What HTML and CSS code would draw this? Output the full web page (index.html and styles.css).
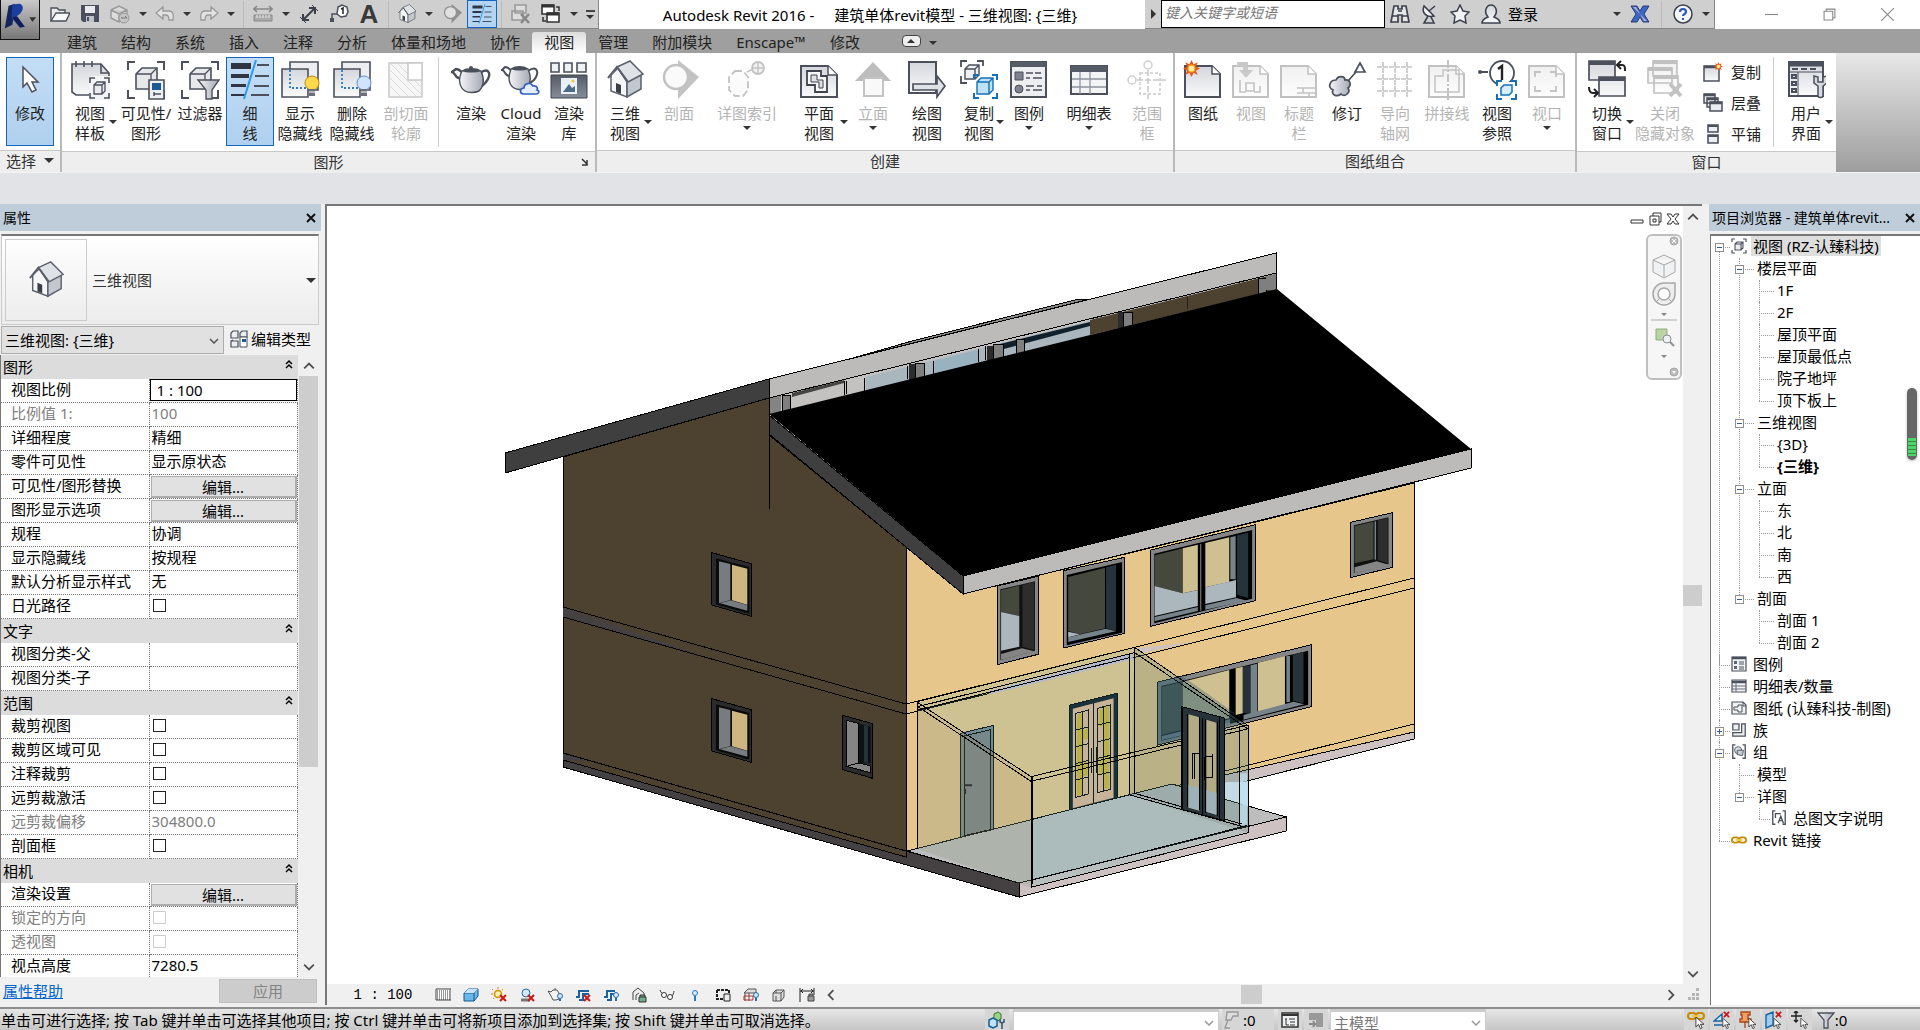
FILE: index.html
```html
<!DOCTYPE html>
<html lang="zh-CN">
<head>
  <meta charset="utf-8">
  <title>Autodesk Revit 2016</title>
  <link rel="stylesheet" href="styles.css">
</head>
<body>
  <!-- icon sprite -->
  <svg class="sprite" width="0" height="0">
    <defs>
      <linearGradient id="steel" x1="0" y1="0" x2="0" y2="1"><stop offset="0" stop-color="#d3d6dc"/><stop offset="1" stop-color="#fafafb"/></linearGradient>
      <linearGradient id="metal" x1="0" y1="0" x2="1" y2="0"><stop offset="0" stop-color="#f4f5f7"/><stop offset="1" stop-color="#a4a9b3"/></linearGradient>
      <linearGradient id="dark" x1="0" y1="0" x2="0" y2="1"><stop offset="0" stop-color="#565b68"/><stop offset="1" stop-color="#868c99"/></linearGradient>
    </defs>
    <symbol id="i-cursor" viewBox="0 0 40 40"><path d="M13 7v20l4-4 5 9 4-2-4-8h6z" fill="#fff" stroke="#4b505c" stroke-width="1.5"/></symbol>
    <symbol id="i-house" viewBox="0 0 40 40"><path d="M6 15l7-7 9 14v15L6 31z" fill="#f5f6f8" stroke="#5b606c" stroke-width="1.5"/><path d="M22 21l14-7v15l-14 8z" fill="#c3c7ce" stroke="#5b606c" stroke-width="1.5"/><path d="M12 7L25 1l13 13-15 8z" fill="#dfe2e6" stroke="#5b606c" stroke-width="1.5"/><path d="M3 18l9-11 11 15" fill="none" stroke="#5b606c" stroke-width="2"/><path d="M11 23l5 2v9l-5-2z" fill="#3a3f4a"/></symbol>
    <symbol id="i-template" viewBox="0 0 40 40"><path d="M2 4h29l8 9v22H6l-4-3z" fill="url(#steel)" stroke="#4b505c" stroke-width="1.6"/><path d="M6 1v6M14 1v6M22 1v6M31 4v9h8" fill="none" stroke="#4b505c" stroke-width="1.6"/><path d="M19 16h21v24H19z" fill="#f3f4f6"/><path d="M20 23v-5h5M34 18h5v5M39 33v5h-5M25 38h-5v-5" fill="none" stroke="#4b505c" stroke-width="1.6"/><path d="M24 25l3-3h8v9l-3 3h-8zM24 25h8v9M32 25l3-3" fill="#e9ebee" stroke="#4b505c" stroke-width="1.3"/></symbol>
    <symbol id="i-framecube" viewBox="0 0 40 40"><path d="M2 10V2h7M31 2h7v8M38 30v8h-7M9 38H2v-8" fill="none" stroke="#4b505c" stroke-width="2"/><path d="M10 14l6-6h15v15l-6 6H10z" fill="#e6e8ec" stroke="#4b505c" stroke-width="1.6"/><path d="M10 14h15v15M25 14l6-6" fill="none" stroke="#4b505c" stroke-width="1.3"/></symbol>
    <symbol id="i-cube16" viewBox="0 0 16 16"><path d="M1 4V1h3M12 1h3v3M15 12v3h-3M4 15H1v-3" fill="none" stroke="#4b505c" stroke-width="1.2"/><path d="M4 6l2-2h6v6l-2 2H4zM4 6h6v6M10 6l2-2" fill="#eee" stroke="#4b505c" stroke-width="1.1"/></symbol>
    <symbol id="i-visibility" viewBox="0 0 40 40"><use href="#i-framecube"/><path d="M23 20h15v19H23z" fill="#eceef1" stroke="#4b505c" stroke-width="1.6"/><path d="M26 23h9v7h-9z" fill="#1c5a96"/><path d="M28 34h7M28 32v4" stroke="#4b505c" stroke-width="1.5"/></symbol>
    <symbol id="i-filter" viewBox="0 0 40 40"><use href="#i-framecube"/><path d="M18 20h21l-7 10v9h-6v-9z" fill="url(#metal)" stroke="#4b505c" stroke-width="1.4"/></symbol>
    <symbol id="i-thin" viewBox="0 0 40 40"><path d="M1 3h20v6H1zM1 14h18v4H1zM1 24h15v3H1zM1 34h14v2H1z" fill="#2f3542"/><path d="M27 5h12M25 16h14M24 26h15M21 35h18" stroke="#4b505c" stroke-width="2"/><path d="M26 0L14 39" stroke="#2f9bea" stroke-width="2"/></symbol>
    <symbol id="i-hidden" viewBox="0 0 40 40"><path d="M10 2h28v28H10z" fill="#eceef1" stroke="#4b505c" stroke-width="1.6"/><path d="M2 9h26v28H2z" fill="url(#steel)" stroke="#4b505c" stroke-width="1.6"/><path d="M10 10v18h17" fill="none" stroke="#2a7ac4" stroke-width="1.8" stroke-dasharray="2 2"/></symbol>
    <symbol id="i-showhide" viewBox="0 0 40 40"><use href="#i-hidden"/><circle cx="32" cy="23" r="7" fill="#ffd94a" stroke="#b98a16"/><path d="M29 29h6v7h-6z" fill="#6a6f7b"/><path d="M29 32h6" stroke="#fff"/></symbol>
    <symbol id="i-delhide" viewBox="0 0 40 40"><use href="#i-hidden"/><circle cx="32" cy="23" r="7" fill="#cfe4ff" stroke="#6890c8"/><path d="M29 29h6v7h-6z" fill="#6a6f7b"/><path d="M29 32h6" stroke="#fff"/></symbol>
    <symbol id="i-cut" viewBox="0 0 40 40"><path d="M3 3h33v34H3z" fill="#e6e7e9" stroke="#666" stroke-width="1.5"/><path d="M4 26l10 10M4 18l18 18M4 10l26 26M5 4l30 30M12 4l24 24" stroke="#999"/><path d="M22 3h14v17H22z" fill="#fff" stroke="#666" stroke-width="1.5"/></symbol>
    <symbol id="i-teapot" viewBox="0 0 40 40"><path d="M8 18C4 18 4 12 1 12l4-3c5 0 6 5 9 5M29 13c8-6 11 0 8 6-2 4-4 6-8 8" fill="none" stroke="#4b505c" stroke-width="2.4"/><path d="M11 11c5-3 14-3 19 0 4 9 2 16-2 20-4 2-11 2-14 0C8 27 7 19 11 11z" fill="url(#metal)" stroke="#4b505c" stroke-width="1.4"/><path d="M11 11c5-3 14-3 19 0-4 2-15 2-19 0z" fill="#4a4f5b"/><circle cx="20" cy="8" r="2" fill="#4a4f5b"/></symbol>
    <symbol id="i-cloud" viewBox="0 0 40 40"><path d="M8 16C4 16 4 10 1 10l3-3c5 0 6 5 8 5M27 11c8-6 11 0 8 6-2 4-4 5-7 6" fill="none" stroke="#4b505c" stroke-width="2"/><path d="M10 9c5-3 12-3 17 0 4 9 2 14-1 19-4 2-10 2-13 0C7 24 7 17 10 9z" fill="url(#metal)" stroke="#4b505c" stroke-width="1.4"/><path d="M10 9c5-3 12-3 17 0-4 2-13 2-17 0z" fill="#4a4f5b"/><path d="M22 34c-4-1-3-6 1-6 0-5 7-6 9-2 4-1 5 3 4 4 3 1 2 4-1 4z" fill="#e4efff" stroke="#3560bd" stroke-width="1.7"/></symbol>
    <symbol id="i-gallery" viewBox="0 0 40 40"><path d="M2 3h8v9H2zM15 3h8v9h-8zM28 3h9v9h-9z" fill="#f0f1f3" stroke="#4b505c" stroke-width="1.6"/><path d="M2 15h36v23H2z" fill="url(#dark)" stroke="#3f444f"/><path d="M12 18h16v16H12z" fill="#e9f1f6"/><path d="M14 32l6-8 3 4 3-2v6z" fill="#4a6d87"/><circle cx="24" cy="21" r="1.5" fill="#f4c33b"/></symbol>
    <symbol id="i-section" viewBox="0 0 40 40"><path d="M19 0l21 17-21 22z" fill="#555"/><circle cx="17" cy="17" r="12" fill="#f1f1f1" stroke="#555" stroke-width="2.5"/></symbol>
    <symbol id="i-callout" viewBox="0 0 40 40"><path d="M8 11h8l5 6v13l-5 6H8l-6-6V17z" fill="#f4f4f4" stroke="#555" stroke-width="1.8" stroke-dasharray="7 3"/><circle cx="31" cy="8" r="6" fill="#ddd" stroke="#555" stroke-width="1.8"/><path d="M20 12l6-3M25 8h12M31 2v12" stroke="#555" stroke-width="1.5"/></symbol>
    <symbol id="i-plan" viewBox="0 0 40 40"><path d="M2 6h27l9 9v22H2z" fill="url(#steel)" stroke="#4b505c" stroke-width="2"/><path d="M29 6v9h9" fill="#fff" stroke="#4b505c" stroke-width="1.5"/><path d="M8 11h14v5h6v16H16v-7H8z" fill="#f5f6f8" stroke="#3e434e" stroke-width="1.8"/><path d="M12 15h6v5h6v8h-4v-6h-8z" fill="#dfe1e5" stroke="#3e434e"/></symbol>
    <symbol id="i-elev" viewBox="0 0 40 40"><path d="M20 2l18 19H2z" fill="#444"/><path d="M11 18h19v18H11z" fill="#f0f0f0" stroke="#555" stroke-width="2"/></symbol>
    <symbol id="i-draft" viewBox="0 0 40 40"><path d="M2 2h27v31H2z" fill="url(#steel)" stroke="#4b505c" stroke-width="2"/><path d="M6 24h24v-8l8 10-8 11v-7H6z" fill="#dfe2e6" stroke="#4b505c" stroke-width="1.7"/></symbol>
    <symbol id="i-dup" viewBox="0 0 40 40"><path d="M2 7V1h6M18 1h6v5M8 23H2v-7" fill="none" stroke="#4b505c" stroke-width="1.8"/><path d="M6 9l4-4h10v10l-4 4H6zM6 9h10v10M16 9l4-4" fill="#eef0f2" stroke="#4b505c" stroke-width="1.4"/><path d="M15 19v-4h5M33 15h5v5M38 33v5h-5M20 38h-5v-5" fill="none" stroke="#1470b8" stroke-width="2"/><path d="M18 22l4-4h12v12l-4 4H18zM18 22h12v12M30 22l4-4" fill="#bfe2f8" stroke="#1470b8" stroke-width="1.4"/></symbol>
    <symbol id="i-legend" viewBox="0 0 40 40"><path d="M2 2h35v35H2z" fill="#eceef1" stroke="#4b505c" stroke-width="2"/><path d="M2 2h35v5H2z" fill="#565b68"/><path d="M6 12h8v8H6z" fill="#7d828e" stroke="#4b505c"/><circle cx="10" cy="29" r="4" fill="#7d828e" stroke="#4b505c"/><path d="M17 13h7M26 13h6M17 18h4M24 18h9M17 26h8M28 26h5M17 30h4M24 30h9" stroke="#4b505c" stroke-width="1.6"/></symbol>
    <symbol id="i-sched" viewBox="0 0 40 40"><path d="M2 6h36v28H2z" fill="#f3f4f6" stroke="#4b505c" stroke-width="2"/><path d="M2 6h36v6H2z" fill="#565b68"/><path d="M3 19h34M3 27h34M11 12v22M21 12v22" stroke="#8f949e" stroke-width="1.3"/></symbol>
    <symbol id="i-legend16" viewBox="0 0 16 16"><path d="M1 1h14v14H1z" fill="#f1f2f4" stroke="#4b505c" stroke-width="1.2"/><path d="M1 2h14" stroke="#4b505c" stroke-width="2.5"/><path d="M3 5h3v3H3zM3 10h3v3H3z" fill="#5f6572"/><path d="M8 6h5M8 8h5M8 11h5M8 13h5" stroke="#4b505c"/></symbol>
    <symbol id="i-sched16" viewBox="0 0 16 16"><path d="M1 2h14v12H1z" fill="#f1f2f4" stroke="#4b505c" stroke-width="1.2"/><path d="M1 4h14" stroke="#4b505c" stroke-width="2.5"/><path d="M1 8h14M1 11h14M5 4v10" stroke="#6a6f7b"/></symbol>
    <symbol id="i-sheet16" viewBox="0 0 16 16"><path d="M1 2h11l3 3v9H1z" fill="#f1f2f4" stroke="#4b505c" stroke-width="1.2"/><path d="M3 7h4V5h4v7H7v-2H3zM12 2v4h3" fill="none" stroke="#4b505c"/></symbol>
    <symbol id="i-scope" viewBox="0 0 40 40"><circle cx="21" cy="5" r="4" fill="#fff" stroke="#777" stroke-width="1.5"/><circle cx="5" cy="20" r="4" fill="#fff" stroke="#777" stroke-width="1.5"/><path d="M21 10v29M10 20h29" stroke="#666" stroke-width="1.5" stroke-dasharray="6 2"/><path d="M13 13h20v21H13z" fill="none" stroke="#666" stroke-width="1.5" stroke-dasharray="3 2"/></symbol>
    <symbol id="i-sheet" viewBox="0 0 40 40"><path d="M2 6h27l8 8v23H2z" fill="url(#steel)" stroke="#4b505c" stroke-width="2"/><path d="M29 6v8h8" fill="#fff" stroke="#4b505c" stroke-width="1.5"/></symbol>
    <symbol id="i-spark" viewBox="0 0 16 16"><path d="M8 0l2 4 4-2-2 4 4 2-4 2 2 4-4-2-2 4-2-4-4 2 2-4-4-2 4-2-2-4 4 2z" fill="#e8561c"/><circle cx="8" cy="8" r="3.2" fill="#fff2a0" stroke="#f5a623"/></symbol>
    <symbol id="i-newsheet" viewBox="0 0 40 40"><use href="#i-sheet"/><use href="#i-spark" width="17" height="17"/></symbol>
    <symbol id="i-placeview" viewBox="0 0 40 40"><use href="#i-sheet"/><path d="M6 2h11v8h5l-7 8-7-8h4V6H6z" fill="#666"/><path d="M9 20v12h6M23 32h6v-6M15 23h8v8h-8z" fill="none" stroke="#555" stroke-width="1.6"/></symbol>
    <symbol id="i-titleblock" viewBox="0 0 40 40"><use href="#i-sheet"/><path d="M18 28h19M18 33h19M24 28v5M30 33v4" stroke="#555" stroke-width="1.6"/></symbol>
    <symbol id="i-revision" viewBox="0 0 40 40"><path d="M33 3l5 9H28zM29 12l-8 9" fill="none" stroke="#4b505c" stroke-width="1.7"/><path d="M9 20c2-5 9-4 9 0 5-1 7 5 3 8 3 4-3 10-7 6-5 4-10 0-8-4-6-3-3-10 3-10z" fill="url(#metal)" stroke="#4b505c" stroke-width="1.7"/></symbol>
    <symbol id="i-grid" viewBox="0 0 40 40"><path d="M2 7h36M2 19h36M2 31h36M8 2v36M20 2v36M32 2v36" stroke="#555" stroke-width="1.6" stroke-dasharray="5 1"/></symbol>
    <symbol id="i-match" viewBox="0 0 40 40"><use href="#i-sheet"/><path d="M8 16h8v-6h16v22H8z" fill="none" stroke="#555" stroke-width="1.5"/><path d="M21 0v40" stroke="#555" stroke-width="2" stroke-dasharray="8 2 2 2"/></symbol>
    <symbol id="i-viewref" viewBox="0 0 40 40"><path d="M2 12h9" stroke="#4b505c" stroke-width="2"/><circle cx="3" cy="12" r="2" fill="#4b505c"/><circle cx="25" cy="13" r="12" fill="#fff" stroke="#4b505c" stroke-width="1.8"/><path d="M21 9l4-3v14" fill="none" stroke="#222" stroke-width="2.4"/><path d="M19 22h20v17H19z" fill="#fff"/><path d="M20 26v-5h5M34 21h5v5M39 34v5h-5M25 39h-5v-5" fill="none" stroke="#1470b8" stroke-width="2"/><path d="M24 28l3-3h8v7l-3 3h-8z" fill="#d7effc" stroke="#1470b8" stroke-width="1.5"/></symbol>
    <symbol id="i-viewport" viewBox="0 0 40 40"><use href="#i-sheet"/><path d="M8 17v-5h6M23 12h6v5M29 26v5h-6M14 31H8v-5" fill="none" stroke="#555" stroke-width="1.8"/></symbol>
    <symbol id="i-switch" viewBox="0 0 40 40"><path d="M2 1h26v19H2zM12 17h26v19H12z" fill="url(#steel)" stroke="#4b505c" stroke-width="1.7"/><path d="M2 1h26v4H2zM12 17h26v4H12z" fill="#4b505c"/><path d="M31 5h4c3 0 3 2 3 6M34 1l-4 4 4 4M10 33H6c-3 0-4-2-4-6M7 29l4 4-4 4" fill="none" stroke="#222" stroke-width="2"/></symbol>
    <symbol id="i-closehid" viewBox="0 0 40 40"><path d="M8 1h24v15H8zM3 8h24v15H3zM9 16h24v17H9z" fill="url(#steel)" stroke="#4b505c" stroke-width="1.7"/><path d="M8 2h24M3 9h24M9 17h24" stroke="#4b505c" stroke-width="4"/><path d="M25 24l11 12M36 24L25 36" stroke="#555" stroke-width="4"/></symbol>
    <symbol id="i-ui" viewBox="0 0 40 40"><path d="M3 2h34v34H3z" fill="url(#steel)" stroke="#4b505c" stroke-width="2"/><path d="M3 2h34v4H3zM3 12h34" fill="#4b505c" stroke="#4b505c"/><path d="M6 9h6M15 9h6M24 9h6M6 15h4v3H6zM6 22h4v3H6zM6 29h4v3H6z" fill="none" stroke="#4b505c" stroke-width="2"/><path d="M12 12v24" stroke="#4b505c"/><path d="M28 16v7l4 3v10c0 2 5 2 5 0V26l4-3v-7l-4 1v5h-5v-5z" fill="#d5dae3" stroke="#4b505c" stroke-width="1.5"/></symbol>
    <symbol id="i-cascade" viewBox="0 0 20 20"><path d="M1 1h11v9H1zM4 5h11v9H4z" fill="#eee" stroke="#4b505c" stroke-width="1.5"/><path d="M7 9h12v9H7z" fill="#eceef1" stroke="#4b505c" stroke-width="1.5"/><path d="M1 2h11M4 6h11M7 10h12" stroke="#4b505c" stroke-width="2.5"/></symbol>
    <symbol id="i-tile" viewBox="0 0 20 20"><path d="M5 1h10v7H5zM5 11h10v8H5z" fill="#eceef1" stroke="#4b505c" stroke-width="1.6"/><path d="M5 2h10M5 12h10" stroke="#4b505c" stroke-width="2"/></symbol>
    <symbol id="i-newwin" viewBox="0 0 20 20"><path d="M1 4h15v15H1z" fill="url(#steel)" stroke="#4b505c" stroke-width="1.5"/><path d="M1 5h15" stroke="#4b505c" stroke-width="2.5"/><use href="#i-spark" x="11" width="9" height="9"/></symbol>
    <symbol id="i-open" viewBox="0 0 20 20"><path d="M1 17V4h6l2 2h6v3" fill="#e8eaed" stroke="#4b505c" stroke-width="1.4"/><path d="M1 17L6 9h14l-4 8z" fill="#f8f9fa" stroke="#4b505c" stroke-width="1.4"/></symbol>
    <symbol id="i-save" viewBox="0 0 20 20"><path d="M1 1h18v17H3l-2-2z" fill="#4a505e"/><path d="M5 2h10v7H5z" fill="#e9ebee"/><path d="M6 12h8v6H6z" fill="#bfc3ca"/><path d="M8 13v4" stroke="#4a505e" stroke-width="2"/></symbol>
    <symbol id="i-sync" viewBox="0 0 20 20"><path d="M1 6l8-4 8 4v8l-8 4-8-4zM1 6l8 4 8-4M9 10v8" fill="#dcdcdc" stroke="#999" stroke-width="1.4"/><circle cx="14" cy="14" r="5" fill="#c4c4c4" stroke="#999"/><path d="M11 14h6l-2-2" fill="none" stroke="#777"/></symbol>
    <symbol id="i-undo" viewBox="0 0 20 20"><path d="M1 9l7-6v4h6c4 0 5 4 4 9h-4c0-4-1-5-3-5H8v4z" fill="#e2e2e2" stroke="#999" stroke-width="1.3"/></symbol>
    <symbol id="i-redo" viewBox="0 0 20 20"><path d="M19 9l-7-6v4H6c-4 0-5 4-4 9h4c0-4 1-5 3-5h3v4z" fill="#e2e2e2" stroke="#999" stroke-width="1.3"/></symbol>
    <symbol id="i-ruler" viewBox="0 0 20 20"><path d="M1 5h18M4 2L1 5l3 3M16 2l3 3-3 3" fill="none" stroke="#888" stroke-width="1.6"/><path d="M1 11h18v6H1z" fill="#aaa" stroke="#888"/><path d="M4 11v3M7 11v3M10 11v3M13 11v3M16 11v3" stroke="#eee"/></symbol>
    <symbol id="i-dim" viewBox="0 0 20 20"><path d="M4 16L16 4M4 10v6h6M10 4h6v6" fill="none" stroke="#3c414c" stroke-width="2"/><path d="M1 13l6 6M13 1l6 6" stroke="#3c414c"/></symbol>
    <symbol id="i-tag" viewBox="0 0 20 20"><path d="M9 3l4-2 5 2 1 5-2 4-5 1-4-3z" fill="#fff" stroke="#4b505c" stroke-width="1.5"/><path d="M12 5l2-1v6" fill="none" stroke="#222" stroke-width="1.5"/><path d="M8 10H3v5" fill="none" stroke="#4b505c" stroke-width="1.5"/><path d="M1 14h4v4H1z" fill="#4b505c"/></symbol>
    <symbol id="i-sw20" viewBox="0 0 20 20"><path d="M1 1h12v9H1zM6 9h12v9H6z" fill="#fff" stroke="#333" stroke-width="1.6"/><path d="M1 2h12M6 10h12" stroke="#333" stroke-width="3"/><path d="M15 3h3v4M2 13v4h3" fill="none" stroke="#333" stroke-width="1.5"/></symbol>
    <symbol id="i-cl20" viewBox="0 0 20 20"><path d="M4 1h11v8H4zM1 7h11v9H1z" fill="#ddd" stroke="#999" stroke-width="1.6"/><path d="M10 10l8 9M18 10l-8 9" stroke="#888" stroke-width="2.5"/></symbol>
    <symbol id="i-bino" viewBox="0 0 20 20"><path d="M4 2h4v3h4V2h4l3 16h-7v-7H8v7H1z" fill="#e4e6ea" stroke="#3c414c" stroke-width="1.7"/><path d="M2 12h6M12 12h6M8 7h4" stroke="#3c414c" stroke-width="1.6"/></symbol>
    <symbol id="i-dish" viewBox="0 0 20 20"><path d="M4 2c-3 7 3 12 10 10z" fill="#f3f4f6" stroke="#3c414c" stroke-width="1.6"/><path d="M9 7l6-5M8 12l-4 7h10l-3-6" fill="none" stroke="#3c414c" stroke-width="1.6"/></symbol>
    <symbol id="i-star" viewBox="0 0 20 20"><path d="M10 1l3 6 6 1-4 4 1 7-6-3-6 3 1-7-4-4 6-1z" fill="#f1f2f4" stroke="#3c414c" stroke-width="1.5"/></symbol>
    <symbol id="i-user" viewBox="0 0 20 20"><path d="M1 19c0-4 4-5 6-6-5-6-1-12 3-12s8 6 3 12c2 1 6 2 6 6z" fill="url(#steel)" stroke="#3c414c" stroke-width="1.6"/></symbol>
    <symbol id="i-x" viewBox="0 0 20 20"><path d="M1 2h6l3 5 3-5h6l-5 8 5 8h-6l-3-5-3 5H1l5-8z" fill="#3f66c4" stroke="#2b3f75"/><path d="M3 3h3l8 14h3z" fill="#a9b6d6"/></symbol>
    <symbol id="i-help" viewBox="0 0 20 20"><circle cx="10" cy="10" r="9" fill="#f4f6fa" stroke="#3c414c" stroke-width="1.5"/><path d="M7 8c0-4 6-4 6 0 0 2-3 2-3 4" fill="none" stroke="#2a57b8" stroke-width="2.2"/><path d="M9 14h2v2H9z" fill="#2a57b8"/></symbol>
    <symbol id="i-chev" viewBox="0 0 10 6"><path d="M1 1l4 4 4-4" fill="none" stroke="currentColor" stroke-width="1.5"/></symbol>
    <symbol id="i-close" viewBox="0 0 10 10"><path d="M1 1l8 8M9 1L1 9" stroke="#111" stroke-width="2"/></symbol>
    <symbol id="i-edittype" viewBox="0 0 18 18"><path d="M1 3l2-2h5v7H1zM10 3l2-2h5v6h-7zM1 11h7v6H1zM1 11l2-1" fill="#eceef1" stroke="#4b505c" stroke-width="1.2"/><path d="M10 7h7v10h-7z" fill="#fff" stroke="#4b505c"/><path d="M12 9h4v3h-4z" fill="#1c5a96"/></symbol>
    <symbol id="i-link" viewBox="0 0 18 18"><rect x="1" y="6" width="8" height="6" rx="3" fill="none" stroke="#c58a00" stroke-width="2"/><rect x="9" y="6" width="8" height="6" rx="3" fill="none" stroke="#c58a00" stroke-width="2"/><path d="M5 9h8" stroke="#f2c84b" stroke-width="2"/></symbol>
    <symbol id="i-family" viewBox="0 0 18 18"><path d="M2 2h7v7H2zM12 2h4v14H2v-4h10z" fill="#eceef1" stroke="#4b505c" stroke-width="1.4"/></symbol>
    <symbol id="i-group" viewBox="0 0 18 18"><path d="M5 1H2v15h3M13 1h3v15h-3" fill="none" stroke="#4b505c" stroke-width="1.5"/><circle cx="8" cy="7" r="4" fill="#dde0e5" stroke="#4b505c"/><path d="M7 7h7l-1 6-6-1z" fill="#c8ccd3" stroke="#4b505c"/></symbol>
    <symbol id="i-tgroup" viewBox="0 0 18 18"><path d="M5 1H2v15h3M13 1h3v15h-3M5 9V4h6M8 15l3-8 3 8M9 12h4" fill="none" stroke="#4b505c" stroke-width="1.5"/></symbol>
    <symbol id="i-arrow" viewBox="0 0 10 14"><path d="M1 1v11l3-3 2 5 2-1-2-4h4z" fill="#fff" stroke="#333"/></symbol>
    <symbol id="i-redx" viewBox="0 0 8 8"><path d="M1 1l6 6M7 1L1 7" stroke="#d01717" stroke-width="2"/></symbol>
    <symbol id="i-box16" viewBox="0 0 16 16"><path d="M1 6l4-4h10v7l-4 5H1z" fill="#6db6ea" stroke="#14598f"/><path d="M1 6h10v8M11 6l4-4" fill="none" stroke="#14598f"/><path d="M1 6l4-4h10l-4 4z" fill="#c6e5fa"/></symbol>
  </svg>

  <header class="titlebar">
    <div class="qat">
      <button class="tool" aria-label="打开"><svg><use href="#i-open"/></svg></button>
      <button class="tool" aria-label="保存"><svg><use href="#i-save"/></svg></button>
      <button class="tool" aria-label="同步"><svg><use href="#i-sync"/></svg></button>
      <button class="drop" aria-label="同步选项"></button>
      <button class="tool narrow" aria-label="放弃"><svg><use href="#i-undo"/></svg></button>
      <button class="drop" aria-label="放弃列表"></button>
      <button class="tool narrow" aria-label="重做"><svg><use href="#i-redo"/></svg></button>
      <button class="drop" aria-label="重做列表"></button>
      <span class="sep"></span>
      <button class="tool" aria-label="测量"><svg><use href="#i-ruler"/></svg></button>
      <button class="drop" aria-label="测量选项"></button>
      <button class="tool" aria-label="对齐尺寸标注"><svg><use href="#i-dim"/></svg></button>
      <button class="tool" aria-label="按类别标记"><svg><use href="#i-tag"/></svg></button>
      <button class="tool letter">A</button>
      <span class="sep"></span>
      <button class="tool narrow" aria-label="默认三维视图"><svg><use href="#i-house"/></svg></button>
      <button class="drop" aria-label="三维视图选项"></button>
      <button class="tool faded" aria-label="剖面"><svg><use href="#i-section"/></svg></button>
      <button class="tool active" aria-label="细线"><svg><use href="#i-thin"/></svg></button>
      <span class="sep"></span>
      <button class="tool" aria-label="关闭隐藏窗口"><svg><use href="#i-cl20"/></svg></button>
      <button class="tool" aria-label="切换窗口"><svg><use href="#i-sw20"/></svg></button>
      <button class="drop" aria-label="窗口列表"></button>
      <button class="drop custom" aria-label="自定义快速访问工具栏"></button>
    </div>
    <div class="title"><span>Autodesk Revit 2016 -</span><span>建筑单体revit模型 - 三维视图: {三维}</span></div>
    <div class="infocenter">
      <button class="expand" aria-label="展开"></button>
      <input class="search" type="text" placeholder="键入关键字或短语" aria-label="搜索">
      <button class="tool" aria-label="查找"><svg><use href="#i-bino"/></svg></button>
      <button class="tool" aria-label="通讯中心"><svg><use href="#i-dish"/></svg></button>
      <button class="tool" aria-label="收藏夹"><svg><use href="#i-star"/></svg></button>
      <button class="login"><svg><use href="#i-user"/></svg>登录</button>
      <button class="drop" aria-label="登录选项"></button>
      <button class="tool" aria-label="Exchange"><svg><use href="#i-x"/></svg></button>
      <span class="sep"></span>
      <button class="tool" aria-label="帮助"><svg><use href="#i-help"/></svg></button>
      <button class="drop" aria-label="帮助选项"></button>
    </div>
    <div class="winbtns">
      <button aria-label="最小化"><svg viewBox="0 0 12 12"><path d="M0 6h12"/></svg></button>
      <button aria-label="还原"><svg viewBox="0 0 12 12"><path d="M1 3h8v8H1zM3 3V1h8v8H9"/></svg></button>
      <button aria-label="关闭"><svg viewBox="0 0 12 12"><path d="M0 0l12 12M12 0L0 12"/></svg></button>
    </div>
    <button class="appmenu" aria-label="应用程序菜单">
      <svg viewBox="0 0 40 39"><path d="M8 5l7-2-3 22-8 4z" fill="#14265e"/><path d="M12 4l7-1c7 1 4 11-3 13l9 11-5 1-9-10z" fill="#1c3f9e"/><path d="M12 17l5-1 8 11-5 1z" fill="#0f1e55"/><path d="M30 17h7l-4 5z" fill="#333"/></svg>
    </button>
  </header>

  <nav class="tabs">
    <a href="#">建筑</a><a href="#">结构</a><a href="#">系统</a><a href="#">插入</a><a href="#">注释</a><a href="#">分析</a><a href="#">体量和场地</a><a href="#">协作</a><a href="#" class="current">视图</a><a href="#">管理</a><a href="#">附加模块</a><a href="#">Enscape™</a><a href="#">修改</a>
    <button class="minimize" aria-label="最小化功能区"><i></i></button>
    <button class="drop" aria-label="功能区选项"></button>
  </nav>

  <div class="ribbon">
    <section class="panel">
      <div class="tools">
        <button class="big w48 active modify"><svg><use href="#i-cursor"/></svg><span>修改</span></button>
      </div>
      <h2 class="left">选择<i class="tri"></i></h2>
    </section>
    <section class="panel">
      <div class="tools">
        <button class="big w56"><svg><use href="#i-template"/></svg><span>视图<br>样板</span><i class="tri side"></i></button>
        <button class="big w56"><svg><use href="#i-visibility"/></svg><span>可见性/<br>图形</span></button>
        <button class="big w52"><svg><use href="#i-filter"/></svg><span>过滤器</span></button>
        <button class="big w48 active"><svg><use href="#i-thin"/></svg><span>细<br>线</span></button>
        <button class="big w52"><svg><use href="#i-showhide"/></svg><span>显示<br>隐藏线</span></button>
        <button class="big w52"><svg><use href="#i-delhide"/></svg><span>删除<br>隐藏线</span></button>
        <button class="big w56" disabled><svg><use href="#i-cut"/></svg><span>剖切面<br>轮廓</span></button>
        <span class="rule"></span>
        <button class="big w56"><svg><use href="#i-teapot"/></svg><span>渲染</span></button>
        <button class="big w44"><svg><use href="#i-cloud"/></svg><span>Cloud<br>渲染</span></button>
        <button class="big w52"><svg><use href="#i-gallery"/></svg><span>渲染<br>库</span></button>
      </div>
      <h2>图形<svg class="launch" viewBox="0 0 8 8"><path d="M1 1l5 5M6 2v5H1" fill="none" stroke="#333" stroke-width="1.5"/></svg></h2>
    </section>
    <section class="panel">
      <div class="tools">
        <button class="big w56"><svg><use href="#i-house"/></svg><span>三维<br>视图</span><i class="tri side"></i></button>
        <button class="big w52" disabled><svg><use href="#i-section"/></svg><span>剖面</span></button>
        <button class="big w84" disabled><svg><use href="#i-callout"/></svg><span>详图索引</span><i class="tri"></i></button>
        <button class="big w60"><svg><use href="#i-plan"/></svg><span>平面<br>视图</span><i class="tri side"></i></button>
        <button class="big w48" disabled><svg><use href="#i-elev"/></svg><span>立面</span><i class="tri"></i></button>
        <button class="big w60"><svg><use href="#i-draft"/></svg><span>绘图<br>视图</span></button>
        <button class="big w44"><svg><use href="#i-dup"/></svg><span>复制<br>视图</span><i class="tri side"></i></button>
        <button class="big w56"><svg><use href="#i-legend"/></svg><span>图例</span><i class="tri"></i></button>
        <button class="big w64"><svg><use href="#i-sched"/></svg><span>明细表</span><i class="tri"></i></button>
        <button class="big w52" disabled><svg><use href="#i-scope"/></svg><span>范围<br>框</span></button>
      </div>
      <h2>创建</h2>
    </section>
    <section class="panel padded">
      <div class="tools">
        <button class="big w52"><svg><use href="#i-newsheet"/></svg><span>图纸</span></button>
        <button class="big w44" disabled><svg><use href="#i-placeview"/></svg><span>视图</span></button>
        <button class="big w52" disabled><svg><use href="#i-titleblock"/></svg><span>标题<br>栏</span></button>
        <button class="big w44"><svg><use href="#i-revision"/></svg><span>修订</span></button>
        <button class="big w52" disabled><svg><use href="#i-grid"/></svg><span>导向<br>轴网</span></button>
        <button class="big w52" disabled><svg><use href="#i-match"/></svg><span>拼接线</span></button>
        <button class="big w48"><svg><use href="#i-viewref"/></svg><span>视图<br>参照</span></button>
        <button class="big w52" disabled><svg><use href="#i-viewport"/></svg><span>视口</span><i class="tri"></i></button>
      </div>
      <h2>图纸组合</h2>
    </section>
    <section class="panel padded last">
      <div class="tools">
        <button class="big w56"><svg><use href="#i-switch"/></svg><span>切换<br>窗口</span><i class="tri side"></i></button>
        <button class="big w60" disabled><svg><use href="#i-closehid"/></svg><span>关闭<br>隐藏对象</span></button>
        <div class="stack">
          <button><svg><use href="#i-newwin"/></svg>复制</button>
          <button><svg><use href="#i-cascade"/></svg>层叠</button>
          <button><svg><use href="#i-tile"/></svg>平铺</button>
        </div>
        <span class="rule"></span>
        <button class="big w56"><svg><use href="#i-ui"/></svg><span>用户<br>界面</span><i class="tri side"></i></button>
      </div>
      <h2>窗口</h2>
    </section>
    <div class="ribbon-rest"></div>
  </div>
  <div class="optionsbar"></div>

  <main>
    <aside class="properties">
      <h1 class="dock-title">属性<button aria-label="关闭属性"><svg><use href="#i-close"/></svg></button></h1>
      <button class="typesel">
        <span class="thumb"><svg><use href="#i-house"/></svg></span>
        <span>三维视图</span>
        <i class="tri"></i>
      </button>
      <div class="instance">
        <div class="combo">
          <select aria-label="实例"><option>三维视图: {三维}</option></select>
          <svg><use href="#i-chev"/></svg>
        </div>
        <button class="edittype"><svg><use href="#i-edittype"/></svg>编辑类型</button>
      </div>
      <div class="grid-wrap">
        <div class="grid-view">
          <table class="props">
            <colgroup><col><col></colgroup>
            <tr class="cat"><th colspan="2">图形<svg viewBox="0 0 8 10"><path d="M1 5l3-3 3 3M1 9l3-3 3 3"/></svg></th></tr>
            <tr><th><label for="scale">视图比例</label></th><td><input type="text" id="scale" value="1 : 100"></td></tr>
            <tr class="ro"><th>比例值 1:</th><td>100</td></tr>
            <tr><th>详细程度</th><td>精细</td></tr>
            <tr><th>零件可见性</th><td>显示原状态</td></tr>
            <tr><th>可见性/图形替换</th><td class="btn"><button>编辑...</button></td></tr>
            <tr><th>图形显示选项</th><td class="btn"><button>编辑...</button></td></tr>
            <tr><th>规程</th><td>协调</td></tr>
            <tr><th>显示隐藏线</th><td>按规程</td></tr>
            <tr><th>默认分析显示样式</th><td>无</td></tr>
            <tr><th><label for="sun">日光路径</label></th><td><input type="checkbox" id="sun"></td></tr>
            <tr class="cat"><th colspan="2">文字<svg viewBox="0 0 8 10"><path d="M1 5l3-3 3 3M1 9l3-3 3 3"/></svg></th></tr>
            <tr><th>视图分类-父</th><td></td></tr>
            <tr><th>视图分类-子</th><td></td></tr>
            <tr class="cat"><th colspan="2">范围<svg viewBox="0 0 8 10"><path d="M1 5l3-3 3 3M1 9l3-3 3 3"/></svg></th></tr>
            <tr><th><label for="crop">裁剪视图</label></th><td><input type="checkbox" id="crop"></td></tr>
            <tr><th><label for="cropvis">裁剪区域可见</label></th><td><input type="checkbox" id="cropvis"></td></tr>
            <tr><th><label for="anno">注释裁剪</label></th><td><input type="checkbox" id="anno"></td></tr>
            <tr><th><label for="far">远剪裁激活</label></th><td><input type="checkbox" id="far"></td></tr>
            <tr class="ro"><th>远剪裁偏移</th><td>304800.0</td></tr>
            <tr><th><label for="box">剖面框</label></th><td><input type="checkbox" id="box"></td></tr>
            <tr class="cat"><th colspan="2">相机<svg viewBox="0 0 8 10"><path d="M1 5l3-3 3 3M1 9l3-3 3 3"/></svg></th></tr>
            <tr><th>渲染设置</th><td class="btn"><button>编辑...</button></td></tr>
            <tr class="ro"><th><label for="lock">锁定的方向</label></th><td><input type="checkbox" id="lock" disabled></td></tr>
            <tr class="ro"><th><label for="persp">透视图</label></th><td><input type="checkbox" id="persp" disabled></td></tr>
            <tr><th>视点高度</th><td>7280.5</td></tr>
          </table>
        </div>
        <div class="vscroll">
          <button class="up" aria-label="向上"><svg><use href="#i-chev"/></svg></button>
          <span class="thumb-prop"></span>
          <button aria-label="向下"><svg><use href="#i-chev"/></svg></button>
        </div>
      </div>
      <div class="prop-foot"><a href="#">属性帮助</a><button disabled>应用</button></div>
    </aside>

    <section class="view">
      <div class="canvas">
        <svg class="model" viewBox="327 206 1356 778">
          <!-- far roof edge and clerestory strip -->
          <path class="l" d="M853 358L912 341 1075 300 1090 299z" fill="#8a8a8a"/>
          <path d="M769 398L1276 273v20L769 414z" fill="#c3c2c1"/>
          <path d="M866 377L1090 321v20L866 395z" fill="#a9b6be"/>
          <path d="M935 361L978 350v12L935 374z" fill="#99b2bf"/>
          <path d="M1000 344L1090 322v4L1000 350z" fill="#10212c"/>
          <path d="M1090 320L1276 274v16L1090 335z" fill="#4d422f"/>
          <path d="M792 393L844 380v3L792 397z" fill="#444"/>
          <path d="M769 398l12-3v17l-12 3z" fill="#848484"/>
          <path class="l" d="M844 381v14M846 381v13M864 378v13M907 366v13M933 361v13M978 349v13M985 346v14" fill="none"/>
          <path class="l" d="M782 395h8v17h-8zM915 363h9v17h-9zM993 344h10v17h-10zM1016 339h8v16h-8zM1123 312h9v17h-9zM1258 278h8v17h-8z" fill="#7f7f7f"/>
          <path d="M909 364h6v16h-6zM987 346h6v15h-6zM1118 312h5v17h-5z" fill="#2c2c2c"/>
          <path d="M1266 276l10-2v16h-10z" fill="#7f7f7f"/>
          <path class="l" d="M1187 297v12" fill="none" stroke-opacity=".5"/>
          <!-- walls -->
          <path class="l" d="M563 457L769 398v37l137 112v310L563 760z" fill="#4d422f"/>
          <path class="l" d="M906 547l57 47 451-111v252L906 857z" fill="#e7c68c"/>
          <path class="l" d="M1414 732v7L1195 794l-28-6z" fill="#cdc1c1"/>
          <path class="l" d="M1414 724L1185 781M906 704l508-126M906 714l508-126" fill="none"/>
          <path d="M563 607l140 49-140-39zM563 753l26 8-26-1z" fill="#454142"/>
          <path class="l" d="M563 607l343 97M563 617l343 97M563 753l343 98M769 379v130" fill="none"/>
          <!-- slab -->
          <path class="l" d="M563 760l343 97v-6l113 32v14L563 767z" fill="#454142"/>
          <path class="l" d="M907 851l265-67 114 33-267 66z" fill="#bdbdbd"/>
          <path class="l" d="M1019 883l267-66v14l-267 66z" fill="#cdc1c1"/>
          <!-- roof -->
          <path class="l" d="M505 453L769 379v19L505 473z" fill="#3f3f3f"/>
          <path class="l" d="M769 379L1276 253v20L769 398z" fill="#bcbbba"/>
          <path class="l" d="M1276 273v16" fill="none"/>
          <path d="M769 414L1277 289l194 160-508 127z" fill="#000"/>
          <path class="l" d="M769 415l194 161v18L769 434z" fill="#3f3f3f"/>
          <path class="l" d="M963 576l508-127v19L963 594z" fill="#bcbbba"/>
          <!-- gable windows -->
          <g transform="translate(490 520) scale(.3333)">
            <g id="gw">
              <path class="l" d="M665 98l119 33v158l-119-34z" fill="#2b2b2b"/>
              <path d="M678 115l100 26v140l-100-28z" fill="#0a0a0a"/>
              <path d="M687 124l34 8v108l-34 10z" fill="#767c80"/>
              <path d="M726 134l46 12v108l-46-13z" fill="#cdb680"/>
              <path d="M690 250l31-9 51 14v17z" fill="#767c80"/>
            </g>
            <use href="#gw" y="438"/>
            <path class="l" d="M1058 586l90 25v164l-90-26z" fill="#2b2b2b"/>
            <path class="l" d="M1070 601l37 10v118l-37 10z" fill="#858585"/>
            <path d="M1108 611l34 9v110h-34z" fill="#0c1114"/>
            <path d="M1122 616h12v112h-12z" fill="#27333b"/>
            <path class="l" d="M1070 739l37-10 34 9v20z" fill="#858585"/>
          </g>
          <!-- front openings and glass porch -->
          <g transform="translate(890 480) scale(.3571 .3333)">
            <path class="l" d="M300 318l115-29v234l-115 31z" fill="#858585"/>
            <path d="M309 328l97-24v208l-97 28z" fill="#111"/>
            <path d="M311 330l51-13v91l-51-12z" fill="#45483c"/>
            <path d="M311 396l51 12v92l-51 12z" fill="#abb6bd"/>
            <path d="M371 315l33-9v204l-33-10z" fill="#2d2d2d"/>
            <path d="M311 522l58-17 35 9-93 25z" fill="#858585"/>

            <path class="l" d="M486 272l171-40v228l-171 44z" fill="#858585"/>
            <path d="M495 285l155-39v212l-155 38z" fill="#000"/>
            <path d="M499 291l103-28v182l-70 18-33-10z" fill="#45483c"/>
            <path d="M499 455l33 8-33 9z" fill="#abb6bd"/>
            <path d="M605 262l28-8v200l-28-9z" fill="#27333b"/>
            <path d="M499 472l105-26 28 8-133 32z" fill="#76838b"/>

            <path class="l" d="M730 210l293-76v228l-293 77z" fill="#858585"/>
            <path d="M740 221l274-71v206l-274 74z" fill="#000"/>
            <path d="M741 226l79-21v135l-79-22z" fill="#45483c"/>
            <path d="M820 205l42-11v136l-42 10z" fill="#cec091"/>
            <path d="M741 318l79 22 42-10v48l-121 30z" fill="#abb6bd"/>
            <path d="M883 189l67-17v134l-67 16z" fill="#cec091"/>
            <path d="M953 172l15-4v130h-15z" fill="#76838b"/>
            <path d="M883 322l86-22v52l-86 20z" fill="#abb6bd"/>
            <path d="M972 166l31-8v196l-31-10z" fill="#27333b"/>
            <path d="M741 411l121-30v12l-121 31zM883 376l87-22 30 8-117 27z" fill="#76838b"/>
            <path d="M868 192h4v200h-4z" fill="#666"/>

            <path class="l" d="M1290 127l117-29v164l-117 31z" fill="#858585"/>
            <path d="M1299 136l97-24v140l-97 28z" fill="#111"/>
            <path d="M1301 138l53-13v113l-53 12z" fill="#45483c"/>
            <path d="M1357 124h4v115h-4z" fill="#76838b"/>
            <path d="M1366 121l28-7v136l-28-10z" fill="#2d2d2d"/>
            <path d="M1301 262l62-18 33 10-95 26z" fill="#858585"/>

            <!-- ground floor window -->
            <path class="l" d="M750 606l431-112v186L750 795z" fill="#858585"/>
            <path d="M760 618l411-106v162L760 782z" fill="#000"/>
            <path d="M762 620l58-15v144l-58 15z" fill="#45483c"/>
            <path d="M820 605l130-35v145l-130 30z" fill="#cec091"/>
            <path d="M968 565l20-5v140l-20 5zM1030 548l76-20v150l-76 20z" fill="#cec091"/>
            <path d="M988 560l22-4v146l-22-4zM1128 524l30-8v154l-30-8z" fill="#27333b"/>
            <path d="M1010 556l18-5v148h-18zM1110 528h10v138h-10z" fill="#76838b"/>
            <path d="M762 768l190-50v14l-190 48zM990 705l140-40 30 8-170 46z" fill="#76838b"/>

            <!-- light on the floor band -->
            <path d="M690 505l165-20-150 34z" fill="#cdc1c1"/>
            <path d="M270 635L680 520v18L280 643z" fill="#c3bcd0"/>

            <!-- grey door -->
            <path class="l" d="M198 760l92-24v312l-92 24z" fill="#76838b"/>
            <path class="l" d="M208 768l73-19v300l-73 18z" fill="#7b7f82"/>
            <path d="M208 916h22M210 926v16" stroke="#111" stroke-width="6"/>
            <!-- wooden double door -->
            <path class="l" d="M502 676l134-36v314l-134 36z" fill="#0b171e"/>
            <path d="M512 686l114-31v298l-114 32z" fill="#dfb492"/>
            <path class="l" d="M569 670v302M520 700l36-10v252l-36 10zM581 685l36-10v253l-36 10z" fill="none"/>
            <path d="M524 704l14-4v244l-14 4zM540 750l14-4v30l-14 4zM540 850l14-4v40l-14 4zM600 682l13-4v246l-13 4zM586 690l12-3v50l-12 4zM586 835l12-3v50l-12 4z" fill="#cdb02f"/>
            <path class="l" d="M538 696v252M598 682v250M522 750l34-9M522 800l34-9M522 850l34-9M522 900l34-9M583 735l34-9M583 785l34-9M583 835l34-9M583 885l34-9M565 805v75M578 800v78" fill="none"/>

            <!-- glazing tint -->
            <path d="M78 668L685 502l319 236v320L395 1222 78 1107z" fill="#60b0b0" fill-opacity=".18"/>
            <path d="M78 668l317 224v330L78 1107z" fill="#c08050" fill-opacity=".13"/>
            <path d="M685 502l319 236v320L672 945z" fill="#50604f" fill-opacity=".16"/>
            <path d="M888 930l55-24h60v74z" fill="#c4dbe6"/>
            <path d="M978 880h22v155h-22z" fill="#bfe6f4" fill-opacity=".7"/>
            <path d="M750 606l69-18 145 110v25L750 795z" fill="#25506a" fill-opacity=".3"/>
            <path class="l" d="M78 665L685 502l319 236M78 680L685 518l319 230M78 690L670 533M78 665v442M685 502v440M672 522v423l316 95M685 940l300 92M978 738v300" fill="none"/>
            <path class="l" d="M78 668l317 222 609-155M78 680l317 224 609-158" fill="none"/>
            <path class="l" d="M395 890v332l609-164V735M399 892v320M399 1200l600-163" fill="none"/>
            <!-- glass double door -->
            <path class="l" d="M817 680l119 34v308l-119-34z" fill="#27333b"/>
            <path d="M836 703l30 9v280l-30-9zM886 719l28 9v276l-28-9z" fill="#b3ab84"/>
            <path d="M836 915l30 8v68l-30-9zM886 930l28 9v65l-28-9z" fill="#9fb1b8"/>
            <path class="l" d="M820 684v304M834 702v280M866 711v280M874 715v288M884 718v280M916 727v280M924 712v308M936 714v306" fill="none"/>
            <path class="l" d="M848 820v76M852 820v76M848 820h18M880 830v70M902 822v72M886 830h18M886 892h18" fill="none"/>
          </g>
        </svg>
        <div class="mdi">
          <button aria-label="最小化视图"><svg viewBox="0 0 14 14"><path d="M1 8h12v3H1z"/></svg></button>
          <button aria-label="还原视图"><svg viewBox="0 0 14 14"><path d="M2 4h9v9H2zM5 4V1h8v9h-2M5 7h3v3H5z"/></svg></button>
          <button aria-label="关闭视图"><svg viewBox="0 0 14 14"><path d="M1 2h4l2 3 2-3h4L9 7l4 5H9L7 9l-2 3H1l4-5z"/></svg></button>
        </div>
        <div class="navbar">
          <svg viewBox="0 0 36 146">
            <rect x="1" y="1" width="34" height="144" rx="5" fill="#f6f6f6" stroke="#bfbfbf" stroke-width="2"/>
            <g fill="none" stroke="#a8a8a8"><circle cx="28" cy="7" r="4" fill="#bbb"/><path d="M26 5l4 4M30 5l-4 4" stroke="#fff"/><path d="M7 26l11-5 11 5v12l-11 6-11-6zM7 26l11 5 11-5M18 31v13" fill="#f0f1f2"/><path d="M18 49h11v11a11 11 0 1 1-11-11z" fill="#eceeef" stroke-width="1.5"/><circle cx="18" cy="60" r="6" fill="#fafafa" stroke-width="1.5"/><path d="M14 64l-4 4M22 64l4 4M5 86h26"/></g>
            <path d="M15 79h6l-3 3zM15 121h6l-3 3z" fill="#888"/>
            <path d="M10 95h11v11H10z" fill="#b9d3a5" stroke="#8fae7b"/><circle cx="21" cy="105" r="4" fill="#eef2f4" stroke="#8a8f95"/><path d="M24 108l4 4" stroke="#8a8f95" stroke-width="2"/>
            <circle cx="28" cy="138" r="4" fill="#bbb" stroke="#a8a8a8"/><path d="M26 137h4l-2 3z" fill="#fff"/>
          </svg>
        </div>
      </div>
      <div class="vscroll view-v">
        <button class="up" aria-label="向上滚动"><svg><use href="#i-chev"/></svg></button>
        <span class="thumb-view"></span>
        <button aria-label="向下滚动"><svg><use href="#i-chev"/></svg></button>
      </div>
      <div class="viewbar">
        <button class="scale">1 : 100</button>
        <button aria-label="详细程度"><svg viewBox="0 0 16 16"><path d="M1 2h15v11H1z" fill="#fff" stroke="#444"/><path d="M2 4h13M2 6h13M2 8h13M2 10h13M2 12h13" stroke="#333" stroke-dasharray="1 1"/></svg></button>
        <button aria-label="视觉样式"><svg><use href="#i-box16"/></svg></button>
        <button aria-label="日光路径"><svg viewBox="0 0 16 16"><circle cx="7" cy="7" r="3.5" fill="#fff3b0" stroke="#d18c00" stroke-width="1.5"/><path d="M7 0v2M1 2l1 1M0 7h2M2 12l1-1M12 2l-1 1" stroke="#d18c00"/><use href="#i-redx" x="8" y="7" width="8" height="8"/></svg></button>
        <button aria-label="阴影"><svg viewBox="0 0 16 16"><path d="M2 13h9" stroke="#777" stroke-width="3"/><circle cx="7" cy="6" r="4" fill="#cfe8fb" stroke="#2b6ca5"/><use href="#i-redx" x="8" y="7" width="8" height="8"/></svg></button>
        <button aria-label="渲染"><svg viewBox="0 0 16 16"><path d="M1 4l3 1 2-2h4l2 3v6l-3 1H6L4 9zM7 2h2" fill="#f3f3f3" stroke="#555"/><circle cx="13" cy="9" r="2.5" fill="#cfe8fb" stroke="#2b6ca5"/><path d="M12 12h2v2h-2z" fill="#2b6ca5"/></svg></button>
        <button aria-label="裁剪视图"><svg viewBox="0 0 16 16"><path d="M1 10h3V4h10M4 13h4V7h6" fill="none" stroke="#1b62a0" stroke-width="2"/><use href="#i-redx" x="8" y="7" width="8" height="8"/></svg></button>
        <button aria-label="裁剪区域"><svg viewBox="0 0 16 16"><path d="M1 10h3V4h8M4 13h4V7h4" fill="none" stroke="#1b62a0" stroke-width="2"/><circle cx="13" cy="8" r="2.5" fill="#cfe8fb" stroke="#2b6ca5"/><path d="M12 11h2v3h-2z" fill="#2b6ca5"/></svg></button>
        <button aria-label="锁定三维视图"><svg viewBox="0 0 16 16"><path d="M2 13V5l5-4 6 5v3M5 13V8l3-2" fill="#eee" stroke="#444"/><path d="M8 10h7v5H8zM9 10V8h5v2" fill="#6fae8c" stroke="#333"/></svg></button>
        <button aria-label="临时隐藏"><svg viewBox="0 0 16 16"><path d="M1 3c1 3 2 3 3 4M15 4c-1 5-2 5-3 6" fill="none" stroke="#333"/><circle cx="5" cy="8" r="2.5" fill="#fff" stroke="#333"/><circle cx="11" cy="10" r="2.5" fill="#fff" stroke="#333"/></svg></button>
        <button aria-label="显示隐藏图元"><svg viewBox="0 0 16 16"><circle cx="8" cy="6" r="2.5" fill="#d7ecff" stroke="#2478c8"/><path d="M7 9h2v5H7z" fill="#2478c8"/></svg></button>
        <button aria-label="临时视图属性"><svg viewBox="0 0 16 16"><path d="M2 3h12v3M2 3v9h6" fill="none" stroke="#222" stroke-width="2" stroke-dasharray="3 1"/><path d="M9 7h6v7H9z" fill="#eee" stroke="#222"/></svg></button>
        <button aria-label="分析模型"><svg viewBox="0 0 16 16"><path d="M1 6l4-4h8v4H1zM2 6v8M6 6v8" fill="#ddd" stroke="#555"/><path d="M1 9h9v4H1z" fill="none" stroke="#b33"/><circle cx="13" cy="8" r="2.5" fill="#cfe8fb" stroke="#2b6ca5"/><path d="M12 11h2v3h-2z" fill="#2b6ca5"/></svg></button>
        <button aria-label="位移集"><svg viewBox="0 0 16 16"><path d="M2 6l3-3h8v7l-3 4H2zM2 6h8v8M10 6l3-3M5 6V3M5 14V9" fill="#ddd" stroke="#555"/></svg></button>
        <button aria-label="约束"><svg viewBox="0 0 16 16"><path d="M1 1v14M15 1v7M1 4h14M4 2L2 4l2 2M12 2l2 2-2 2" fill="none" stroke="#222"/><path d="M9 9h6v5H9zM10 9V7h4v2" fill="#999" stroke="#444"/></svg></button>
        <div class="hscroll">
          <button class="lf" aria-label="向左"><svg><use href="#i-chev"/></svg></button>
          <span class="thumb-h"></span>
          <button class="rt" aria-label="向右"><svg><use href="#i-chev"/></svg></button>
        </div>
      </div>
      <svg class="grip" viewBox="0 0 19 21"><path d="M13 4h3v3h-3zM9 9h3v3H9zM13 9h3v3h-3zM5 13h3v3H5zM9 13h3v3H9zM13 13h3v3h-3z" fill="#b5b5b5"/></svg>
    </section>

    <aside class="browser">
      <h1 class="dock-title">项目浏览器 - 建筑单体revit...<button aria-label="关闭项目浏览器"><svg><use href="#i-close"/></svg></button></h1>
      <div class="tree-box">
        <ul class="tree">
          <li><div class="row"><button class="tog" aria-label="折叠"></button><svg><use href="#i-cube16"/></svg><span class="sel">视图 (RZ-认臻科技)</span></div>
            <ul>
              <li><div class="row"><button class="tog" aria-label="折叠"></button>楼层平面</div>
                <ul><li><div class="row">1F</div></li><li><div class="row">2F</div></li><li><div class="row">屋顶平面</div></li><li><div class="row">屋顶最低点</div></li><li><div class="row">院子地坪</div></li><li><div class="row">顶下板上</div></li></ul></li>
              <li><div class="row"><button class="tog" aria-label="折叠"></button>三维视图</div>
                <ul><li><div class="row">{3D}</div></li><li><div class="row"><b>{三维}</b></div></li></ul></li>
              <li><div class="row"><button class="tog" aria-label="折叠"></button>立面</div>
                <ul><li><div class="row">东</div></li><li><div class="row">北</div></li><li><div class="row">南</div></li><li><div class="row">西</div></li></ul></li>
              <li><div class="row"><button class="tog" aria-label="折叠"></button>剖面</div>
                <ul><li><div class="row">剖面 1</div></li><li><div class="row">剖面 2</div></li></ul></li>
            </ul></li>
          <li><div class="row"><svg><use href="#i-legend16"/></svg><span>图例</span></div></li>
          <li><div class="row"><svg><use href="#i-sched16"/></svg><span>明细表/数量</span></div></li>
          <li><div class="row"><svg><use href="#i-sheet16"/></svg><span>图纸 (认臻科技-制图)</span></div></li>
          <li><div class="row"><button class="tog plus" aria-label="展开"></button><svg><use href="#i-family"/></svg><span>族</span></div></li>
          <li><div class="row"><button class="tog" aria-label="折叠"></button><svg><use href="#i-group"/></svg><span>组</span></div>
            <ul>
              <li><div class="row">模型</div></li>
              <li><div class="row"><button class="tog" aria-label="折叠"></button>详图</div>
                <ul><li><div class="row icon"><svg><use href="#i-tgroup"/></svg><span>总图文字说明</span></div></li></ul></li>
            </ul></li>
          <li><div class="row"><svg><use href="#i-link"/></svg><span>Revit 链接</span></div></li>
        </ul>
        <div class="meter"></div>
      </div>
    </aside>
  </main>

  <footer class="status">
    <span class="hint">单击可进行选择; 按 Tab 键并单击可选择其他项目; 按 Ctrl 键并单击可将新项目添加到选择集; 按 Shift 键并单击可取消选择。</span>
    <button aria-label="工作集"><svg viewBox="0 0 18 18"><path d="M6 3l4-2 3 2v5l-3 2-4-2z" fill="#9fd08a" stroke="#2c7a1e"/><path d="M1 9l4-2 4 2v6l-4 2-4-2z" fill="#bfe2f8" stroke="#145c97" stroke-width="1.5"/><path d="M12 8v3l2 1v6M16 8v3l-2 1" fill="none" stroke="#356" stroke-width="1.5"/></svg></button>
    <div class="combo ws"><select aria-label="活动工作集"><option></option></select><svg><use href="#i-chev"/></svg></div>
    <button class="count"><svg viewBox="0 0 18 18"><path d="M5 1h11v4h-5l-2 4H4zM6 9l-3 8h5" fill="#ddd" stroke="#999" stroke-width="1.4"/></svg>:0</button>
    <button aria-label="设计选项"><svg viewBox="0 0 18 18"><path d="M1 2h16v14H1z" fill="#eef0f2" stroke="#333" stroke-width="1.5"/><path d="M1 4h16" stroke="#333" stroke-width="2"/><path d="M4 8h2M8 8h6M5 8v6h3M9 11h5M9 14h5" fill="none" stroke="#333"/></svg></button>
    <button aria-label="添加到集"><svg viewBox="0 0 18 18"><path d="M2 2h14v14H9V9H2z" fill="#999"/><path d="M2 13h6l-2-3M6 16l2-3" fill="none" stroke="#888" stroke-width="2"/></svg></button>
    <div class="combo opt"><select aria-label="设计选项集"><option>主模型</option></select><svg><use href="#i-chev"/></svg></div>
    <div class="selectors">
      <button aria-label="选择链接"><svg viewBox="0 0 18 18"><use href="#i-link" y="-4" width="18" height="18"/><use href="#i-arrow" x="8" y="5" width="9" height="13"/></svg></button>
      <button aria-label="选择基线图元"><svg viewBox="0 0 18 18"><path d="M1 10l8-7v7zM1 14h9" fill="#cfe8fb" stroke="#1b62a0" stroke-width="1.4"/><use href="#i-redx" x="10" width="7" height="7"/><use href="#i-arrow" x="9" y="6" width="8" height="12"/></svg></button>
      <button aria-label="选择锁定图元"><svg viewBox="0 0 18 18"><path d="M2 1h9v3H9v4h3v3H1V8h2V4H2zM6 11v6" fill="#f0a060" stroke="#a5441a" stroke-width="1.3"/><use href="#i-arrow" x="9" y="6" width="8" height="12"/></svg></button>
      <button aria-label="按面选择图元"><svg viewBox="0 0 18 18"><path d="M1 4l7-3v13l-7 3z" fill="#9ccdf0" stroke="#1b62a0" stroke-width="1.4"/><use href="#i-redx" x="10" width="7" height="7"/><use href="#i-arrow" x="8" y="6" width="8" height="12"/></svg></button>
      <button aria-label="选择时拖拽图元"><svg viewBox="0 0 18 18"><path d="M5 0v11M0 5h11M3 2l2-2 2 2M3 9l2 2 2-2" fill="none" stroke="#222" stroke-width="1.4"/><use href="#i-arrow" x="9" y="6" width="8" height="12"/></svg></button>
      <button class="count flt"><svg viewBox="0 0 18 18"><path d="M1 2h16l-6 7v8H7V9z" fill="url(#metal)" stroke="#4b505c" stroke-width="1.3"/></svg>:0</button>
    </div>
  </footer>
</body>
</html>
```

FILE: styles.css
```css
* {
  box-sizing: border-box;
}

body {
  margin: 0;
  height: 100vh;
  display: flex;
  flex-direction: column;
  overflow: hidden;
  background-color: #f0f0f0;
  color: #000;
  font: 15px/20px "Noto Sans", "Noto Sans CJK SC", sans-serif;
}

button, input, select {
  margin: 0;
  padding: 0;
  border: 0;
  border-radius: 0;
  background: none;
  font: inherit;
  color: inherit;
}

svg {
  display: block;
  flex: none;
}

.sprite {
  position: absolute;
}

/* title bar */
.titlebar {
  position: relative;
  display: flex;
  height: 29px;
  background-color: #fff;
}

.qat, .infocenter {
  display: flex;
  align-items: center;
  background-color: #cfcfcf;
  border-bottom: 1px solid #868686;
  border-right: 1px solid #868686;
}

.qat {
  margin-left: 40px;
  padding-left: 5px;
}

.tool {
  display: flex;
  align-items: center;
  justify-content: center;
  width: 30px;
  height: 28px;
}

.tool svg {
  width: 20px;
  height: 20px;
}

.narrow {
  width: 28px;
}

.faded {
  opacity: 0.5;
}

.tool.active {
  background-color: #b3d4f2;
  border: 1px solid #1565c0;
}

.letter {
  font: bold 26px/28px "Liberation Sans", sans-serif;
  color: #3a3a3a;
}

.drop {
  width: 16px;
  height: 20px;
  display: flex;
  align-items: center;
  justify-content: center;
}

.drop::after, .tri {
  content: "";
  width: 0;
  height: 0;
  border: 4px solid transparent;
  border-top-color: #333;
  border-bottom: 0;
}

.drop.custom {
  flex-direction: column;
  gap: 3px;
}

.drop.custom::before {
  content: "";
  width: 9px;
  height: 2px;
  background-color: #444;
}

.sep {
  width: 1px;
  height: 27px;
  margin: 0 4px;
  background-color: #bababa;
}

.infocenter .sep {
  margin: 0 6px;
}

.title {
  flex: 1;
  display: flex;
  align-items: center;
  justify-content: center;
  gap: 20px;
  padding-right: 4px;
  white-space: nowrap;
}

.expand {
  width: 16px;
  display: flex;
  justify-content: center;
}

.expand::after {
  content: "";
  border: 5px solid transparent;
  border-left-color: #333;
  border-right: 0;
}

.search {
  width: 224px;
  height: 28px;
  padding: 0 0 3px 3px;
  border: 1px solid #000;
  background-color: #fff;
  font-size: 14px;
  font-style: italic;
}

.search::placeholder {
  color: #777;
}

.login {
  display: flex;
  align-items: center;
  gap: 7px;
  width: 134px;
  padding-left: 6px;
}

.login svg {
  width: 20px;
  height: 20px;
}

.winbtns {
  display: flex;
  width: 205px;
  padding: 0 4px 0 27px;
}

.winbtns button {
  flex: 1;
  display: flex;
  align-items: center;
  justify-content: center;
}

.winbtns svg {
  width: 13px;
  height: 13px;
  fill: none;
  stroke: #888;
}

.appmenu {
  position: absolute;
  left: 0;
  top: 0;
  z-index: 2;
  width: 40px;
  height: 40px;
  background: linear-gradient(#c9c9c9, #777);
  border: 1px solid #111;
  border-top: 0;
}

/* ribbon tabs */
.tabs {
  display: flex;
  align-items: flex-end;
  height: 24px;
  padding-left: 55px;
  background-color: #9f9f9f;
}

.tabs a {
  height: 21px;
  padding: 0 12px;
  color: #222;
  text-decoration: none;
}

.tabs .current {
  background: linear-gradient(#dcdcdc, #fff);
  border-radius: 3px 3px 0 0;
}

.minimize {
  display: flex;
  align-items: center;
  justify-content: center;
  width: 19px;
  height: 12px;
  margin: 0 4px 6px 30px;
  border: 1px solid #444;
  border-radius: 4px;
  background-color: #eee;
}

.minimize i {
  border: 4px solid transparent;
  border-bottom-color: #333;
  border-top: 0;
}

/* ribbon */
.ribbon {
  display: flex;
  height: 119px;
}

.panel {
  display: flex;
  flex-direction: column;
  border-right: 2px solid #b9b9b9;
  background-color: #fff;
}

.panel.last {
  border-right: 0;
}

.tools {
  display: flex;
  flex: 1;
  padding: 4px 0;
}

.padded .tools {
  padding: 4px 2px;
}

.panel h2 {
  display: flex;
  align-items: center;
  justify-content: center;
  position: relative;
  height: 22px;
  margin: 0;
  padding-bottom: 2px;
  border-top: 1px solid #c8c8c8;
  background-color: #eee;
  color: #333;
  font-size: 15px;
  font-weight: normal;
}

.panel h2.left {
  gap: 8px;
}

.left .tri {
  border-width: 5px 5px 0;
}

.launch {
  position: absolute;
  right: 6px;
  width: 8px;
  height: 8px;
}

.big {
  position: relative;
  display: flex;
  flex-direction: column;
  align-items: center;
  height: 89px;
  padding-top: 3px;
  white-space: nowrap;
  color: #222;
}

.big svg {
  width: 40px;
  height: 40px;
  margin-bottom: 3px;
}

.big .tri {
  margin-top: 3px;
}

.big .tri.side {
  position: absolute;
  right: 1px;
  top: 60px;
}

.big.w44 .tri.side {
  right: -3px;
}

.big:disabled {
  color: #b4b4b4;
}

.big:disabled svg {
  opacity: 0.35;
  filter: grayscale(1);
}

.big.active {
  padding-top: 2px;
  border: 1px solid #1565c0;
  background: linear-gradient(#c3ddf5, #b0d0ef);
}

.modify {
  margin: 0 6px;
}

.w44 { width: 44px; }
.w48 { width: 48px; }
.w52 { width: 52px; }
.w56 { width: 56px; }
.w60 { width: 60px; }
.w64 { width: 64px; }
.w84 { width: 84px; }

.rule {
  width: 1px;
  height: 90px;
  margin: 0 4px;
  background-color: #ccc;
}

.stack {
  display: flex;
  flex-direction: column;
  justify-content: space-between;
  padding: 5px 8px 3px;
}

.stack button {
  display: flex;
  align-items: center;
  gap: 8px;
  color: #222;
}

.stack svg {
  width: 20px;
  height: 20px;
}

.ribbon-rest {
  flex: 1;
  background: linear-gradient(#e8e8e8, #9d9d9d);
}

.optionsbar {
  height: 32px;
  background-color: #e1e3e6;
  border-top: 1px solid #f4f4f4;
}

/* main area */
main {
  flex: 1;
  display: grid;
  grid-template-columns: 321px minmax(0, 1fr) 211px;
  min-height: 0;
}

.dock-title {
  display: flex;
  align-items: center;
  justify-content: space-between;
  height: 27px;
  margin: 0;
  padding: 0 3px;
  background-color: #bfcddb;
  font-size: 14px;
  font-weight: normal;
  white-space: nowrap;
}

.dock-title svg {
  width: 10px;
  height: 10px;
  margin: 0 2px;
}

.properties {
  display: flex;
  flex-direction: column;
  min-height: 0;
}

.typesel {
  display: flex;
  align-items: center;
  height: 91px;
  margin: 3px 2px 0 1px;
  padding: 0 2px 0 3px;
  border: 1px solid #ccc;
  border-top: 2px solid #777;
  background: linear-gradient(#fff, #ececec);
  color: #333;
}

.typesel .tri {
  margin-left: auto;
  border-width: 5px 5px 0;
}

.thumb {
  display: flex;
  align-items: center;
  justify-content: center;
  width: 82px;
  height: 82px;
  margin-right: 5px;
  border: 1px solid #ccc;
}

.thumb svg {
  width: 38px;
  height: 38px;
}

.instance {
  display: flex;
  align-items: center;
  height: 30px;
}

.combo {
  position: relative;
}

.combo select {
  appearance: none;
  width: 100%;
  height: 28px;
  border: 1px solid #adadad;
  background-color: #e1e1e1;
  padding-left: 3px;
}

.combo svg {
  position: absolute;
  right: 5px;
  top: 12px;
  width: 10px;
  height: 6px;
  color: #555;
  pointer-events: none;
}

.instance .combo {
  width: 223px;
  margin: 0 6px 0 1px;
}

.edittype {
  display: flex;
  align-items: center;
  gap: 3px;
  padding-bottom: 3px;
}

.edittype svg {
  width: 18px;
  height: 18px;
}

.grid-wrap {
  flex: 1;
  display: flex;
  min-height: 0;
  border-left: 1px solid #777;
}

.grid-view {
  width: 297px;
  overflow: hidden;
  background-color: #fff;
}

.props {
  width: 100%;
  table-layout: fixed;
  border-collapse: separate;
  border-spacing: 0;
}

.props tr {
  height: 24px;
}

.props th, .props td {
  height: 24px;
  padding: 0 0 3px 2px;
  border-right: 1px dotted #777;
  border-bottom: 1px dotted #777;
  font-weight: normal;
  text-align: left;
  white-space: nowrap;
}

.props th {
  padding-left: 10px;
}

.props .cat th {
  padding: 0 0 1px 2px;
  border: 0;
  background-color: #dcdcdc;
}

.cat svg {
  float: right;
  width: 8px;
  height: 10px;
  margin: 2px 5px;
  fill: none;
  stroke: #000;
  stroke-width: 1.5;
}

.props .ro {
  color: #808080;
}

.props input[type="text"] {
  display: block;
  width: 147px;
  height: 22px;
  margin: 0 0 -2px -2px;
  padding: 0 0 1px 6px;
  border: 1px solid #000;
}

.props .btn {
  padding: 0;
}

.btn button {
  display: block;
  width: 146px;
  height: 22px;
  margin-left: 1px;
  padding-bottom: 1px;
  border: 1px solid #adadad;
  border-right-width: 2px;
  border-bottom-width: 2px;
  background-color: #e1e1e1;
}

.props input[type="checkbox"] {
  appearance: none;
  display: block;
  width: 13px;
  height: 13px;
  margin-left: 1px;
  border: 1px solid #222;
  background-color: #fff;
}

.props input:disabled {
  border-color: #ccc;
}

.vscroll {
  display: flex;
  flex-direction: column;
  width: 19px;
  margin-left: 1px;
  background-color: #f0f0f0;
}

.vscroll button {
  display: flex;
  align-items: center;
  justify-content: center;
  height: 21px;
  color: #505050;
}

.vscroll button:last-child {
  margin-top: auto;
}

.vscroll svg, .hscroll svg {
  width: 12px;
  height: 8px;
}

.up svg {
  transform: rotate(180deg);
}

.thumb-prop {
  height: 72%;
  max-height: 391px;
  background-color: #cdcdcd;
}

.prop-foot {
  display: flex;
  align-items: center;
  justify-content: space-between;
  height: 30px;
  padding: 0 4px 3px 3px;
}

.prop-foot a {
  color: #0066cc;
}

.prop-foot button {
  width: 98px;
  height: 24px;
  border: 1px solid #bfbfbf;
  background-color: #ccc;
  color: #838383;
}

/* 3D view */
.view {
  display: grid;
  grid-template: minmax(0, 1fr) 21px / minmax(0, 1fr) 19px;
  margin: 0 7px 2px 4px;
  border-left: 2px solid #777;
  border-top: 2px solid #777;
}

.canvas {
  position: relative;
  background-color: #fff;
}

.model {
  width: 100%;
  height: 100%;
}

.l {
  stroke: #000;
  vector-effect: non-scaling-stroke;
  shape-rendering: crispEdges;
}

.mdi {
  position: absolute;
  right: 3px;
  top: 6px;
  display: flex;
  gap: 4px;
}

.mdi svg {
  width: 14px;
  height: 14px;
  fill: none;
  stroke: #333;
}

.navbar {
  position: absolute;
  right: 1px;
  top: 28px;
  width: 36px;
  height: 146px;
}

.view .vscroll {
  margin: 0;
}

.thumb-view {
  height: 21px;
  margin-top: auto;
  background-color: #cdcdcd;
}

.viewbar {
  display: flex;
  align-items: center;
}

.viewbar > button {
  width: 28px;
  display: flex;
  justify-content: center;
}

.viewbar > .scale {
  width: 102px;
  padding-left: 10px;
  font: 14px/20px "Liberation Mono", monospace;
}

.viewbar > button svg {
  width: 16px;
  height: 16px;
}

.hscroll {
  flex: 1;
  display: flex;
  align-items: center;
  justify-content: space-between;
  align-self: stretch;
  color: #505050;
  padding: 0 6px 0 4px;
}

.lf svg {
  transform: rotate(90deg);
}

.rt svg {
  transform: rotate(-90deg);
}

.thumb-h {
  width: 21px;
  height: 19px;
  background-color: #cdcdcd;
}

.grip {
  width: 19px;
  height: 21px;
}

/* project browser */
.browser {
  display: flex;
  flex-direction: column;
}

.tree-box {
  position: relative;
  flex: 1;
  margin: 3px 0 2px 1px;
  border-left: 1px solid #777;
  border-top: 2px solid #777;
  background-color: #fff;
}

.tree, .tree ul {
  margin: 0;
  padding: 0;
  list-style: none;
}

.tree ul {
  padding-left: 20px;
}

.tree li {
  position: relative;
}

.tree li::before {
  content: "";
  position: absolute;
  left: 8px;
  top: 0;
  height: 100%;
  border-left: 1px dotted #999;
}

.tree li:last-child::before {
  height: 11px;
}

.tree > li:first-child::before {
  top: 11px;
}

.row {
  position: relative;
  display: flex;
  align-items: center;
  height: 22px;
  padding: 0 0 2px 26px;
  white-space: nowrap;
}

.row::before {
  content: "";
  position: absolute;
  left: 8px;
  top: 11px;
  width: 15px;
  border-top: 1px dotted #999;
}

.tree > li > .row, .row.icon {
  padding-left: 20px;
}

.tree > li > .row::before, .row.icon::before {
  width: 11px;
}

.row svg {
  width: 16px;
  height: 16px;
  margin-right: 4px;
}

.row svg + span {
  padding: 0 2px;
}

.sel {
  background-color: #dedede;
}

.tog {
  position: absolute;
  left: 4px;
  top: 7px;
  width: 9px;
  height: 9px;
  border: 1px solid #8e8f8f;
  background: linear-gradient(#3a5aa0, #3a5aa0) center / 5px 1px no-repeat #fff;
}

.tog.plus {
  background: linear-gradient(#3a5aa0, #3a5aa0) center / 5px 1px no-repeat, linear-gradient(#3a5aa0, #3a5aa0) center / 1px 5px no-repeat #fff;
}

.meter {
  position: absolute;
  right: 3px;
  top: 152px;
  width: 10px;
  height: 72px;
  border-radius: 5px;
  background: repeating-linear-gradient(#4fd66a 0 3px, #2f8a43 3px 4px) 1px 50px / 8px 18px no-repeat #666;
  box-shadow: 0 1px 3px #bbb;
}

/* status bar */
.status {
  display: flex;
  align-items: center;
  height: 23px;
  border-top: 2px solid #8e8e8e;
  background: linear-gradient(#e6e6e6, #c6c6c6);
  overflow: hidden;
  white-space: nowrap;
}

.hint {
  width: 985px;
  padding-left: 1px;
}

.status > button, .selectors button {
  display: flex;
  align-items: center;
  justify-content: center;
  width: 24px;
  height: 21px;
  background-color: #d6d6d6;
}

.status > button svg, .selectors svg {
  width: 18px;
  height: 18px;
}

.status .combo {
  height: 21px;
}

.status .combo select {
  height: 25px;
  border-color: #ccc;
  border-top-width: 3px;
  background-color: #fff;
  color: #777;
}

.status .combo svg {
  top: 11px;
  color: #999;
}

.ws {
  width: 206px;
  margin: 0 3px 0 4px;
}

.status > .count {
  width: 52px;
  margin-right: 4px;
  justify-content: flex-start;
  gap: 3px;
}

.opt {
  width: 156px;
}

.status > button + button {
  margin-right: 2px;
}

.selectors {
  display: flex;
  gap: 2px;
  margin: 0 70px 0 auto;
}

.selectors .flt {
  width: 36px;
  background: none;
}
```
